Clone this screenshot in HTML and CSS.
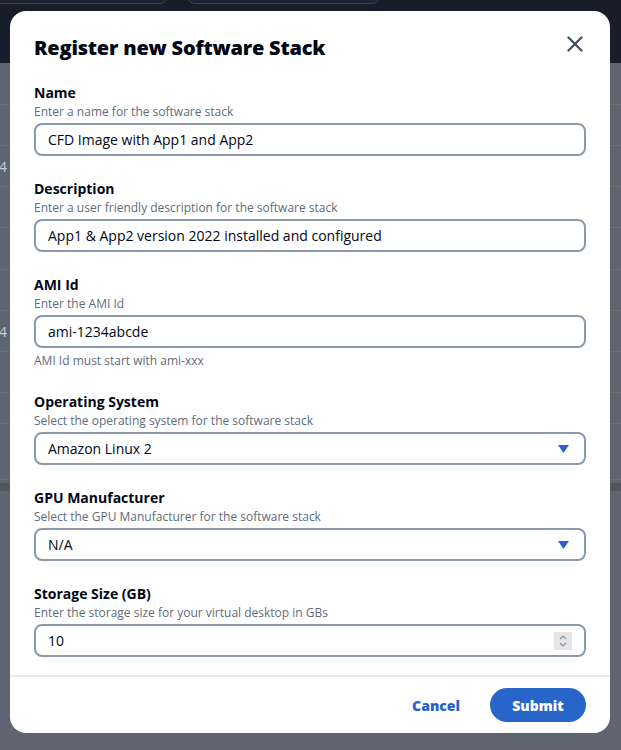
FILE: index.html
```html
<!DOCTYPE html>
<html lang="en">
<head>
<meta charset="utf-8">
<title>Register new Software Stack</title>
<link rel="stylesheet" href="styles.css">
</head>
<body>
<div class="page">
  <header class="topbar">
    <div class="pill pill-a"></div>
    <div class="pill pill-b"></div>
  </header>
  <div class="rows">
    <div class="row r42"></div>
    <div class="row r41"></div>
    <div class="row r41"><span class="cut">4</span></div>
    <div class="row r41"></div>
    <div class="row r42"></div>
    <div class="row r41"></div>
    <div class="row r41"><span class="cut">4</span></div>
    <div class="row r41"></div>
    <div class="row r31"></div>
    <div class="row r56"></div>
    <div class="band"></div>
  </div>
</div>

<div class="modal" role="dialog">
  <div class="modal-head">
    <h1 class="title">Register new Software Stack</h1>
    <button class="close" aria-label="Close">
      <svg width="16" height="16" viewBox="0 0 16 16"><path d="M1.5 1.5 L14.5 14.5 M14.5 1.5 L1.5 14.5" stroke="#414d5c" stroke-width="2.2" stroke-linecap="round" fill="none"/></svg>
    </button>
  </div>
  <div class="modal-body">
    <div class="field">
      <div class="label">Name</div>
      <div class="desc">Enter a name for the software stack</div>
      <div class="input">CFD Image with App1 and App2</div>
    </div>
    <div class="field">
      <div class="label">Description</div>
      <div class="desc">Enter a user friendly description for the software stack</div>
      <div class="input">App1 &amp; App2 version 2022 installed and configured</div>
    </div>
    <div class="field">
      <div class="label">AMI Id</div>
      <div class="desc">Enter the AMI Id</div>
      <div class="input">ami-1234abcde</div>
      <div class="constraint">AMI Id must start with ami-xxx</div>
    </div>
    <div class="field">
      <div class="label">Operating System</div>
      <div class="desc">Select the operating system for the software stack</div>
      <div class="input select">Amazon Linux 2
        <svg class="caret" width="11" height="8" viewBox="0 0 11 8"><path d="M0 0 H11 L5.5 8 Z" fill="#2563c8"/></svg>
      </div>
    </div>
    <div class="field">
      <div class="label">GPU Manufacturer</div>
      <div class="desc">Select the GPU Manufacturer for the software stack</div>
      <div class="input select">N/A
        <svg class="caret" width="11" height="8" viewBox="0 0 11 8"><path d="M0 0 H11 L5.5 8 Z" fill="#2563c8"/></svg>
      </div>
    </div>
    <div class="field">
      <div class="label">Storage Size (GB)</div>
      <div class="desc">Enter the storage size for your virtual desktop in GBs</div>
      <div class="input number">10
        <span class="spin">
          <svg width="18" height="18" viewBox="0 0 18 18"><path d="M6 7 L9 4 L12 7 M6 11 L9 14 L12 11" stroke="#8a8d94" stroke-width="1.2" fill="none"/></svg>
        </span>
      </div>
    </div>
  </div>
  <div class="modal-foot">
    <button class="btn-link">Cancel</button>
    <button class="btn-primary">Submit</button>
  </div>
</div>
</body>
</html>
```
FILE: styles.css
```css
* { box-sizing: border-box; }
html, body { margin: 0; padding: 0; }
body {
  width: 621px;
  height: 750px;
  overflow: hidden;
  background: #5f6570;
  font-family: "Open Sans", "Noto Sans", sans-serif;
  position: relative;
}
.page { width: 100%; }
.topbar {
  height: 63px;
  background: #171d29;
  display: flex;
  gap: 19px;
  padding-left: 0;
}
.pill {
  height: 30px;
  margin-top: -26px;
  border: 1px solid #3a4150;
  border-radius: 8px;
  background: #1a2130;
}
.pill-a { width: 180px; margin-left: -12px; }
.pill-b { width: 193px; }
.rows { display: flex; flex-direction: column; }
.row {
  border-bottom: 1px solid #6a707a;
  display: flex;
  align-items: center;
  color: #c9cdd3;
  font-size: 14px;
}
.r42 { height: 42px; }
.r41 { height: 41px; }
.r31 { height: 31px; }
.r56 { height: 56px; }
.cut { margin-left: -1px; }
.band { height: 8px; margin-top: 3px; background: #51565f; }

.modal {
  position: absolute;
  left: 10px;
  top: 11px;
  width: 600px;
  height: 722px;
  background: #ffffff;
  border-radius: 16px;
  display: flex;
  flex-direction: column;
  overflow: hidden;
}
.modal-head {
  display: flex;
  justify-content: space-between;
  align-items: flex-start;
  padding: 22px 24px 0 24px;
}
.title {
  margin: 0;
  font-size: 20px;
  line-height: 30px;
  font-weight: 800;
  color: #000716;
  letter-spacing: -0.2px;
}
.close {
  border: 0;
  background: none;
  padding: 0;
  margin-top: 3px;
  margin-right: 3px;
  width: 16px;
  height: 16px;
  display: flex;
}
.modal-body {
  flex: 1;
  padding: 20px 24px 0 24px;
  display: flex;
  flex-direction: column;
  gap: 23px;
  overflow: hidden;
}
.field { display: flex; flex-direction: column; }
.label {
  font-size: 14px;
  line-height: 20px;
  font-weight: 700;
  color: #000716;
}
.desc {
  font-size: 12px;
  line-height: 18px;
  color: #5f6b7a;
}
.input {
  margin-top: 2px;
  height: 33px;
  border: 2px solid #8d99a8;
  border-radius: 8px;
  padding: 0 12px;
  display: flex;
  align-items: center;
  font-size: 14px;
  color: #000716;
  position: relative;
}
.select { justify-content: space-between; padding-right: 15px; }
.caret { display: block; }
.number { justify-content: space-between; padding-right: 12px; }
.spin {
  width: 18px;
  height: 18px;
  background: #e6e6ea;
  display: flex;
}
.constraint {
  margin-top: 5px;
  font-size: 12px;
  line-height: 16px;
  color: #5f6b7a;
}
.modal-foot {
  height: 58px;
  border-top: 2px solid #e9ebed;
  display: flex;
  justify-content: flex-end;
  align-items: center;
  gap: 30px;
  padding: 0 24px 0 24px;
}
.btn-link {
  border: 0;
  background: none;
  font-family: inherit;
  font-size: 14px;
  font-weight: 800;
  color: #2563c8;
  padding: 0;
}
.btn-primary {
  border: 0;
  background: #2865c9;
  color: #ffffff;
  font-family: inherit;
  font-size: 14px;
  font-weight: 800;
  height: 34px;
  width: 96px;
  border-radius: 17px;
}
```
